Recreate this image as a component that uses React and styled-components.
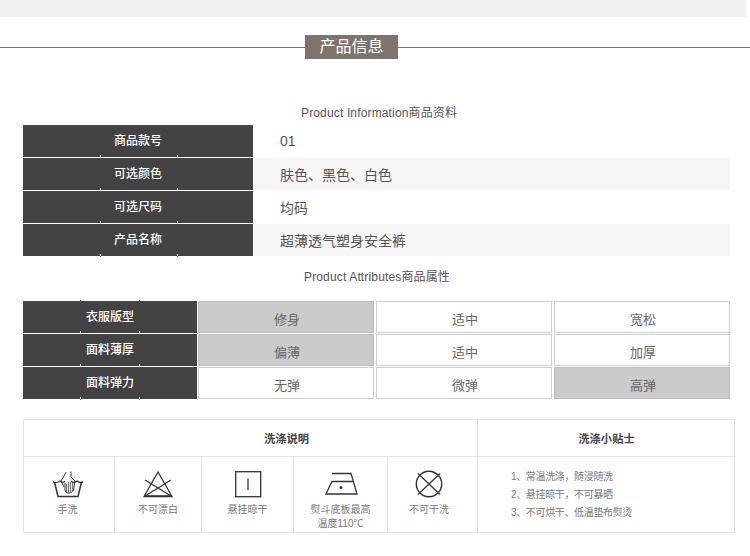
import React from "react";
import styled, { createGlobalStyle } from "styled-components";

const Global = createGlobalStyle`
  html, body { margin: 0; padding: 0; background: #fff; }
  body { font-family: "Liberation Sans", "Noto Sans CJK SC", sans-serif; color: #555; }
`;

const Page = styled.div`
  width: 750px;
  height: 556px;
  overflow: hidden;
`;
const TopBar = styled.div`
  width: 746px;
  height: 17px;
  background: #f1f1f1;
`;
const TitleRow = styled.div`
  display: flex;
  align-items: center;
  margin-top: 18px;
  height: 24px;
`;
const TitleLine = styled.div`
  flex: ${(p) => (p.$fixed ? `0 0 ${p.$fixed}px` : 1)};
  height: 1px;
  background: #7d756b;
`;
const TitleBox = styled.h1`
  width: 93px;
  height: 24px;
  margin: 0;
  background: #7d756b;
  color: #fff;
  font-size: 16px;
  font-weight: 400;
  line-height: 24px;
  text-align: center;
`;
const SubTitle = styled.div`
  height: 16px;
  margin-top: ${(p) => p.$top}px;
  margin-bottom: ${(p) => p.$bottom}px;
  padding-left: ${(p) => p.$left}px;
  font-size: 12px;
  line-height: 16px;
  letter-spacing: 0.15px;
  color: #555;
  white-space: nowrap;
`;
const InfoTable = styled.div`
  display: grid;
  grid-template-columns: 230px 1fr;
  grid-auto-rows: 32px;
  row-gap: 1px;
  width: 707px;
  margin-left: 23px;
`;
const Label = styled.div`
  position: relative;
  display: flex;
  align-items: center;
  justify-content: center;
  padding-bottom: 3px;
  box-sizing: border-box;
  background-color: #444343;
  background-image: linear-gradient(#fff, #fff), linear-gradient(#fff, #fff);
  background-size: 1px 2px;
  background-repeat: no-repeat;
  background-position: ${(p) => p.$ticks[0]}px 100%, ${(p) => p.$ticks[1]}px 100%;
  color: #fff;
  font-size: 12px;
  font-weight: 500;
  &::before, &::after {
    content: "";
    display: ${(p) => (p.$edge ? "block" : "none")};
    position: absolute;
    ${(p) => (p.$edge === "top" ? "top: -1px;" : "bottom: -1px;")}
    width: 1px;
    height: 1px;
    background: #666;
  }
  &::before { left: ${(p) => p.$ticks[0]}px; }
  &::after { left: ${(p) => p.$ticks[1]}px; }
`;
const AttrLabel = styled(Label)`
  margin-right: 1px;
`;
const InfoValue = styled.div`
  display: flex;
  align-items: center;
  margin-left: 1px;
  padding-left: 26px;
  background: ${(p) => (p.$alt ? "#f6f6f6" : "#fff")};
  color: #555;
  font-size: 14px;
`;
const AttrTable = styled.div`
  display: grid;
  grid-template-columns: 175px 178px 178px 178px;
  grid-auto-rows: 32px;
  row-gap: 1px;
  width: 709px;
  margin-left: 23px;
`;
const Option = styled.div`
  display: flex;
  align-items: center;
  justify-content: center;
  box-sizing: border-box;
  margin-right: 2px;
  border: 1px solid ${(p) => (p.$on ? "#bcbcbc" : "#cfcfcf")};
  background: ${(p) => (p.$on ? "#cbcbcb" : "#fff")};
  color: #666;
  font-size: 13px;
  padding: 3px 0 0 2px;
`;
const WashTable = styled.div`
  display: grid;
  grid-template-columns: 454px 257px;
  grid-template-rows: 37px 75px;
  box-sizing: border-box;
  width: 712px;
  height: 114px;
  margin: 20px 0 0 23px;
  border: 1px solid #e3e3e3;
`;
const WashHead = styled.div`
  display: flex;
  align-items: center;
  justify-content: center;
  padding-left: ${(p) => p.$shift || 0}px;
  border-bottom: 1px solid #e3e3e3;
  border-right: ${(p) => (p.$last ? "0" : "1px solid #e3e3e3")};
  color: #444;
  font-size: 11.3px;
  font-weight: 700;
`;
const IconRow = styled.div`
  display: grid;
  grid-template-columns: 91px 87px 92px 94px 1fr;
  border-right: 1px solid #e3e3e3;
`;
const IconCell = styled.div`
  display: flex;
  flex-direction: column;
  align-items: center;
  padding-top: 13px;
  padding-right: ${(p) => p.$shift}px;
  border-right: ${(p) => (p.$last ? "0" : "1px solid #e3e3e3")};
  color: #777;
  font-size: 10px;
  line-height: 14px;
  text-align: center;
`;
const IconBox = styled.div`
  width: 34px;
  height: 28px;
  margin-bottom: 5px;
  svg { display: block; width: 34px; height: 28px; }
`;
const Tips = styled.ol`
  list-style: none;
  margin: 0;
  padding: 11px 0 0 33px;
  color: #777;
  font-size: 10px;
  line-height: 18px;
  letter-spacing: -0.35px;
`;

const strokeProps = { fill: "none", stroke: "#333", strokeWidth: 1.3 };

const HandWash = () => (
  <svg viewBox="0 0 34 28" {...strokeProps}>
    <path d="M2 11.500 C5 14 7 12.500 9 11 C11 12.500 13 13 14 11 M20 11 C22 13 24 13 26 11 C28 12.500 30 13.500 32 11.500" />
    <path d="M3.500 12 L7 26.500 H27 L30.500 12" strokeWidth="1.500" />
    <path d="M15 2 L12 8 L10 11 L13 17 M20 1.500 V7 L24 11 L22.500 20 C21 24 14 24 14 20 V13" strokeWidth="1" />
    <path d="M15.500 14 V22 M17.500 12 V23 M19.500 12 V23 M21.500 13 V22" stroke="#777" strokeWidth="1.200" />
  </svg>
);
const NoBleach = () => (
  <svg viewBox="0 0 34 28" {...strokeProps}>
    <path d="M17 2 L3 26.500 H31 Z" />
    <path d="M5 26 H29" strokeWidth="1.500" />
    <path d="M4 10 L30 26 M30 10 L4 26" />
  </svg>
);
const LineDry = () => (
  <svg viewBox="0 0 34 28" {...strokeProps}>
    <rect x="4.700" y="1.700" width="25" height="25" />
    <path d="M17 8.500 V20" />
  </svg>
);
const IronIcon = () => (
  <svg viewBox="0 0 34 28" {...strokeProps}>
    <path d="M8 3.500 H27 L33 24 H2 L8 11.500 H28.500" />
    <circle cx="17" cy="17.500" r="1.500" fill="#333" stroke="none" />
  </svg>
);
const NoDryClean = () => (
  <svg viewBox="0 0 34 28" {...strokeProps}>
    <circle cx="17" cy="14" r="12.700" strokeWidth="1.400" />
    <path d="M6 3.500 L28 24.500 M28 3.500 L6 24.500" />
  </svg>
);

const info = [
  ["商品款号", "01"],
  ["可选颜色", "肤色、黑色、白色"],
  ["可选尺码", "均码"],
  ["产品名称", "超薄透气塑身安全裤"],
];
const attrs = [
  ["衣服版型", ["修身", "适中", "宽松"], 0],
  ["面料薄厚", ["偏薄", "适中", "加厚"], 0],
  ["面料弹力", ["无弹", "微弹", "高弹"], 2],
];
const care = [
  [HandWash, ["手洗"], 3],
  [NoBleach, ["不可漂白"], 0],
  [LineDry, ["悬挂晾干"], 0],
  [IronIcon, ["熨斗底板最高", "温度110℃"], 0],
  [NoDryClean, ["不可干洗"], 7],
];

export default function App() {
  return (
    <Page>
      <Global />
      <TopBar />
      <TitleRow>
        <TitleLine $fixed={305} />
        <TitleBox>产品信息</TitleBox>
        <TitleLine />
      </TitleRow>
      <SubTitle $top={46} $bottom={4} $left={301}>Product Information商品资料</SubTitle>
      <InfoTable>
        {info.map(([k, v], i) => (
          <React.Fragment key={k}>
            <Label $ticks={[77, 154]} $edge={i === info.length - 1 ? "bottom" : undefined}>{k}</Label>
            <InfoValue $alt={i % 2 === 1}>{v}</InfoValue>
          </React.Fragment>
        ))}
      </InfoTable>
      <SubTitle $top={13} $bottom={16} $left={304}>Product Attributes商品属性</SubTitle>
      <AttrTable>
        {attrs.map(([k, opts, sel], r) => (
          <React.Fragment key={k}>
            <AttrLabel
              $ticks={[57, 116]}
              $edge={r === 0 ? "top" : r === attrs.length - 1 ? "bottom" : undefined}
            >
              {k}
            </AttrLabel>
            {opts.map((o, i) => (
              <Option key={i} $on={i === sel}>{o}</Option>
            ))}
          </React.Fragment>
        ))}
      </AttrTable>
      <WashTable>
        <WashHead $shift={72}>洗涤说明</WashHead>
        <WashHead $last>洗涤小贴士</WashHead>
        <IconRow>
          {care.map(([Icon, lines, shift], i) => (
            <IconCell key={i} $shift={shift} $last={i === care.length - 1}>
              <IconBox><Icon /></IconBox>
              {lines.map((l) => <div key={l}>{l}</div>)}
            </IconCell>
          ))}
        </IconRow>
        <Tips>
          <li>1、常温洗涤，随浸随洗</li>
          <li>2、悬挂晾干，不可暴晒</li>
          <li>3、不可烘干、低温垫布熨烫</li>
        </Tips>
      </WashTable>
    </Page>
  );
}
